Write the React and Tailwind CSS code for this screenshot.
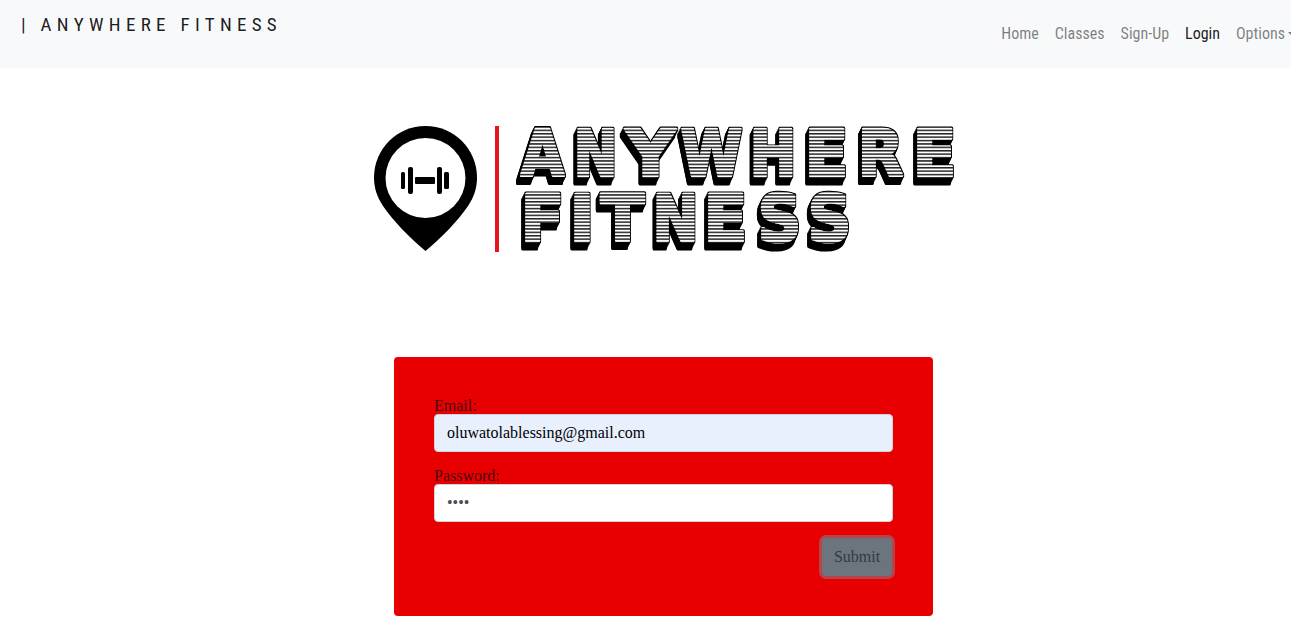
import { useState } from "react";

// letter, x of the face, width of the face
const LINE_ONE = [
  ["A", 521, 43], ["N", 574, 43], ["Y", 626, 49], ["W", 681, 61],
  ["H", 750, 46], ["E", 805, 43], ["R", 858, 45], ["E", 913, 43],
];
const LINE_TWO = [
  ["F", 521, 43], ["I", 570, 24], ["T", 601, 43], ["N", 653, 45],
  ["E", 704, 43], ["S", 758, 43], ["S", 808, 43],
];

function LogoLetters({ letters, baseline }) {
  return (
    <g filter="url(#extrude)" fontFamily="'DejaVu Sans', sans-serif" fontWeight="700" fontSize="64">
      {letters.map(([ch, x, w], i) => (
        <text
          key={i}
          x={x}
          y={baseline}
          textLength={w}
          lengthAdjust="spacingAndGlyphs"
          fill="url(#stripes)"
          stroke="url(#stripes)"
          strokeWidth="3"
          strokeLinejoin="round"
        >
          {ch}
        </text>
      ))}
    </g>
  );
}

function Logo() {
  return (
    <svg className="block mx-auto w-[601px] h-[140px]" viewBox="363 120 601 140">
      <defs>
        <pattern id="stripes" x="0" y="0.4" width="3.4" height="3.4" patternUnits="userSpaceOnUse">
          <rect width="3.4" height="3.4" fill="#fff" />
          <rect width="3.4" height="1.5" fill="#222" />
        </pattern>
        <filter id="extrude" filterUnits="userSpaceOnUse" x="363" y="120" width="601" height="140">
          <feMorphology in="SourceAlpha" operator="dilate" radius="1" result="outline" />
          <feOffset in="outline" dx="-1" dy="2" result="s1" />
          <feOffset in="outline" dx="-2" dy="4" result="s2" />
          <feOffset in="outline" dx="-3" dy="6" result="s3" />
          <feOffset in="outline" dx="-3.500" dy="7" result="s4" />
          <feMerge>
            <feMergeNode in="s4" />
            <feMergeNode in="s3" />
            <feMergeNode in="s2" />
            <feMergeNode in="s1" />
            <feMergeNode in="outline" />
            <feMergeNode in="SourceGraphic" />
          </feMerge>
        </filter>
      </defs>
      {/* map pin */}
      <path d="M425.500 126C397 126 374 149 374 177.500C374 188 377 197 383 206C394 222 410 238 425.500 251C441 238 457 222 468 206C474 197 477 188 477 177.500C477 149 454 126 425.500 126Z" fill="#000" />
      <circle cx="425.500" cy="178" r="40" fill="#fff" />
      <rect x="401" y="172" width="4" height="17" rx="1.500" fill="#000" />
      <rect x="408" y="167" width="5" height="27" rx="2" fill="#000" />
      <rect x="415" y="177" width="20" height="7" rx="1" fill="#000" />
      <rect x="437" y="167" width="5" height="27" rx="2" fill="#000" />
      <rect x="444" y="172" width="5" height="17" rx="1.500" fill="#000" />
      {/* divider */}
      <rect x="495" y="126" width="4" height="126" fill="#e8141c" />
      <LogoLetters letters={LINE_ONE} baseline={176} />
      <LogoLetters letters={LINE_TWO} baseline={241} />
    </svg>
  );
}

function Field({ label, type, value, onChange, bg }) {
  return (
    <div className="mb-[14px]">
      <label className="block h-[18px] leading-[20px] text-[16px] text-[#4a0808]">{label}</label>
      <input
        type={type}
        value={value}
        onChange={onChange}
        className={`block w-full h-[38px] px-[12px] rounded-[4px] border border-[#ced4da] text-[16px] outline-none ${bg}`}
      />
    </div>
  );
}

export default function App() {
  const [email, setEmail] = useState("oluwatolablessing@gmail.com");
  const [password, setPassword] = useState("1234");

  return (
    <div className="min-h-[619px] bg-white overflow-hidden font-['Liberation_Serif',serif]">
      {/* NAVBAR */}
      <nav className="h-[68px] bg-[#f8f9fa] flex justify-between items-start overflow-hidden">
        <div className="pl-[21px] pt-[13px] font-['Roboto_Condensed',sans-serif] text-[19px] leading-[24px] tracking-[5.3px] text-[#000000e6] whitespace-pre">
          | ANYWHERE FITNESS
        </div>
        <ul className="flex items-start gap-[16px] pt-[22px] mr-[-5px] font-['Roboto_Condensed',sans-serif] text-[16px] leading-[24px] text-[#00000080]">
          <li>Home</li>
          <li>Classes</li>
          <li>Sign-Up</li>
          <li className="text-[#000000e6]">Login</li>
          <li className="flex items-center gap-[3px]">
            Options
            <span className="border-x-[4px] border-t-[4px] border-x-transparent border-t-[#00000080]" />
          </li>
        </ul>
      </nav>

      <div className="pl-[36px]">
        {/* LOGO */}
        <div className="pt-[52px] pb-[97px]">
          <Logo />
        </div>

        {/* LOGIN FORM */}
        <form className="w-[539px] mx-auto bg-[#e80000] rounded-[4px] pt-[39px] pb-[40px] px-[40px]">
          <Field label="Email:" type="email" value={email} onChange={(e) => setEmail(e.target.value)} bg="bg-[#e8f0fe] text-black" />
          <Field label="Password:" type="password" value={password} onChange={(e) => setPassword(e.target.value)} bg="bg-white text-[#495057]" />
          <div className="flex justify-end pt-[2px]">
            <button type="button" className="w-[70px] h-[38px] mr-[1px] rounded-[4px] bg-[#6c757d] text-[16px] text-[#343a40] ring-[3px] ring-[#828a9180]">
              Submit
            </button>
          </div>
        </form>
      </div>
    </div>
  );
}
